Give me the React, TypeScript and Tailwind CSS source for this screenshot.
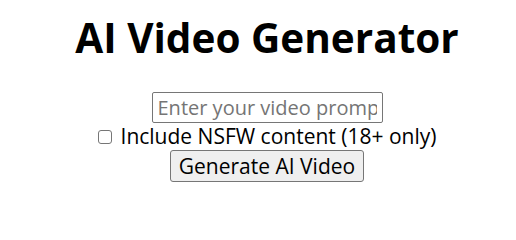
import React from "react";

export default function App() {
  return (
    <div className="w-[516px] h-[224px] bg-white text-black pl-[18px] font-['Open_Sans',sans-serif]">
      <div className="flex flex-col items-center">
        <h1 className="mt-[12px] text-[40.5px] font-bold leading-[52px] text-black">AI Video Generator</h1>
        <input
          type="text"
          placeholder="Enter your video prompt"
          className="mt-[28px] w-[231px] h-[31px] border border-[#767676] rounded-[2px] px-[5px] text-[20px] leading-[24px] placeholder:text-[#757575] outline-none"
        />
        <label className="flex items-center h-[27px] text-[21px] leading-[27px]">
          <input type="checkbox" className="appearance-none w-[14px] h-[14px] border border-[#767676] rounded-[3px] bg-white mr-[9px]" />
          Include NSFW content (18+ only)
        </label>
        <button className="w-[194px] h-[32px] bg-[#efefef] border border-[#767676] rounded-[3px] text-[21px] leading-[24px] text-black">
          Generate AI Video
        </button>
      </div>
    </div>
  );
}
